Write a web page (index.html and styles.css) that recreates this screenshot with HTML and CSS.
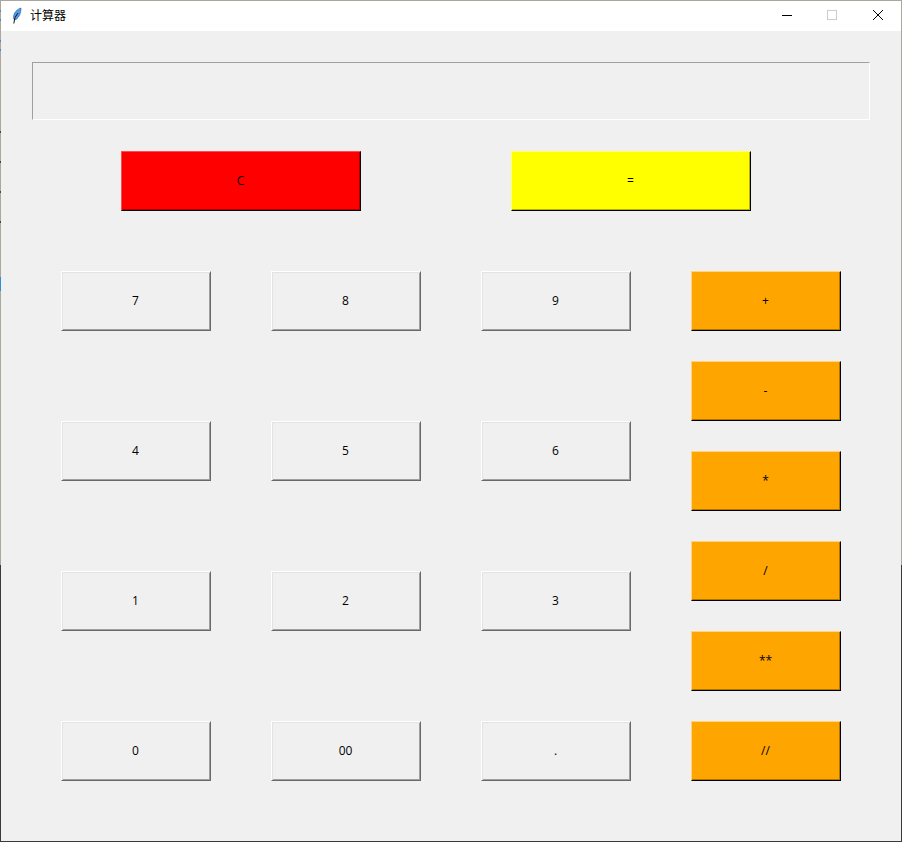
FILE: index.html
```html
<!DOCTYPE html>
<html lang="zh-CN">
<head>
	<meta charset="UTF-8">
	<title>计算器</title>
	<link rel="stylesheet" href="styles.css">
</head>
<body>
<div class="frame">
	<div class="window">
		<div class="titlebar">
			<svg class="feather" width="10" height="17" viewBox="0 0 10 17">
				<path d="M9 1C5.500 2 1.500 5.500 1.500 10.500L2 12.500L4 12.500C7.500 10 9 5.500 9 1Z" fill="#4f9bf2" stroke="#3d5f8f" stroke-width=".7"/>
				<path d="M6 6L3 10.500L1.800 16.500" fill="none" stroke="#10151f" stroke-width="1"/>
			</svg>
			<span class="title">计算器</span>
			<div class="controls">
				<svg class="ctl" width="45" height="30" viewBox="0 0 45 30"><path d="M17 14.500H27" stroke="#000" stroke-width="1" fill="none"/></svg>
				<svg class="ctl" width="45" height="30" viewBox="0 0 45 30"><rect x="17.500" y="9.500" width="9" height="9" stroke="#ccc" stroke-width="1" fill="none"/></svg>
				<svg class="ctl" width="46" height="30" viewBox="0 0 46 30"><path d="M18 9L28 19M28 9L18 19" stroke="#000" stroke-width="1" fill="none"/></svg>
			</div>
		</div>
		<div class="content">
			<div class="display"></div>
			<div class="top-row">
				<button class="btn btn-clear">C</button>
				<button class="btn btn-equal">=</button>
			</div>
			<div class="keypad">
				<div class="digits">
					<button class="btn">7</button>
					<button class="btn">8</button>
					<button class="btn">9</button>
					<button class="btn">4</button>
					<button class="btn">5</button>
					<button class="btn">6</button>
					<button class="btn">1</button>
					<button class="btn">2</button>
					<button class="btn">3</button>
					<button class="btn">0</button>
					<button class="btn">00</button>
					<button class="btn">.</button>
				</div>
				<div class="ops">
					<button class="btn btn-op">+</button>
					<button class="btn btn-op">-</button>
					<button class="btn btn-op">*</button>
					<button class="btn btn-op">/</button>
					<button class="btn btn-op">**</button>
					<button class="btn btn-op">//</button>
				</div>
			</div>
		</div>
	</div>
</div>
</body>
</html>
```

FILE: styles.css
```css
html, body{
	margin: 0;
	height: 100%;
	overflow: hidden;
}
/* the 1px window edge: light above, dark where the desktop behind is dark.
   the small marks on the left are what shows through from behind */
.frame{
	box-sizing: border-box;
	width: 902px;
	height: 842px;
	padding: 1px;
	background:
		linear-gradient(#3f8fcc, #3f8fcc) 0 10px / 1px 2px no-repeat,
		linear-gradient(#3f8fcc, #3f8fcc) 0 19px / 1px 2px no-repeat,
		linear-gradient(#3f8fcc, #3f8fcc) 0 40px / 1px 2px no-repeat,
		linear-gradient(#3f8fcc, #3f8fcc) 0 49px / 1px 2px no-repeat,
		linear-gradient(#4a4344, #4a4344) 0 131px / 1px 2px no-repeat,
		linear-gradient(#4a4344, #4a4344) 0 161px / 1px 2px no-repeat,
		linear-gradient(#4a4344, #4a4344) 0 191px / 1px 2px no-repeat,
		linear-gradient(#4a4344, #4a4344) 0 221px / 1px 2px no-repeat,
		linear-gradient(#2f8fd0, #2f8fd0) 0 277px / 1px 14px no-repeat,
		linear-gradient(#aaa89c 0, #aaa89c 565px, #3a3a3c 565px);
}
.window{
	display: flex;
	flex-direction: column;
	height: 100%;
	background-color: #f0f0f0;
}
.titlebar{
	display: flex;
	align-items: center;
	flex: none;
	height: 30px;
	background-color: #fff;
}
.feather{
	margin-left: 11px;
	margin-bottom: 1px;
}
.title{
	margin-left: 8px;
	margin-bottom: 3px;
	font: 12px "Noto Sans CJK SC", "Liberation Sans", sans-serif;
	color: #000;
}
.controls{
	display: flex;
	margin-left: auto;
}
.ctl{
	display: block;
}
.content{
	flex: 1;
	padding: 31px 31px 0;
}
.display{
	box-sizing: border-box;
	width: 838px;
	height: 58px;
	border: 1px solid;
	border-color: #a0a0a0 #fff #fff #a0a0a0;
}
.top-row{
	display: flex;
	gap: 150px;
	margin: 31px 0 0 89px;
}
.keypad{
	display: flex;
	gap: 60px;
	margin: 60px 0 0 29px;
}
.digits{
	display: grid;
	grid-template-columns: repeat(3, 150px);
	grid-auto-rows: 60px;
	column-gap: 60px;
	row-gap: 90px;
}
.ops{
	display: flex;
	flex-direction: column;
	gap: 30px;
}
/* raised look: border is the outer bevel, inset shadow the inner one */
.btn{
	box-sizing: border-box;
	display: block;
	width: 150px;
	height: 60px;
	margin: 0;
	padding: 0 1px 2px 0;
	border: 1px solid;
	border-color: #fff #696969 #696969 #fff;
	border-radius: 0;
	font: 12px "Open Sans", "Liberation Sans", sans-serif;
	color: #000;
	background-color: #f0f0f0;
	box-shadow: inset 1px 1px 0 #e3e3e3, inset -1px -1px 0 #a0a0a0;
}
.btn-clear, .btn-equal{
	width: 240px;
}
.btn-clear{
	background-color: #f00;
	border-color: #ff4d4d #000 #000 #ff4d4d;
	box-shadow: inset -1px -1px 0 #b30000;
}
.btn-equal{
	background-color: #ff0;
	border-color: #ffff66 #000 #000 #ffff66;
	box-shadow: inset -1px -1px 0 #b3b300;
}
.btn-op{
	background-color: #ffa500;
	border-color: #ffd37f #000 #000 #ffd37f;
	box-shadow: inset -1px -1px 0 #b37400;
}
```
